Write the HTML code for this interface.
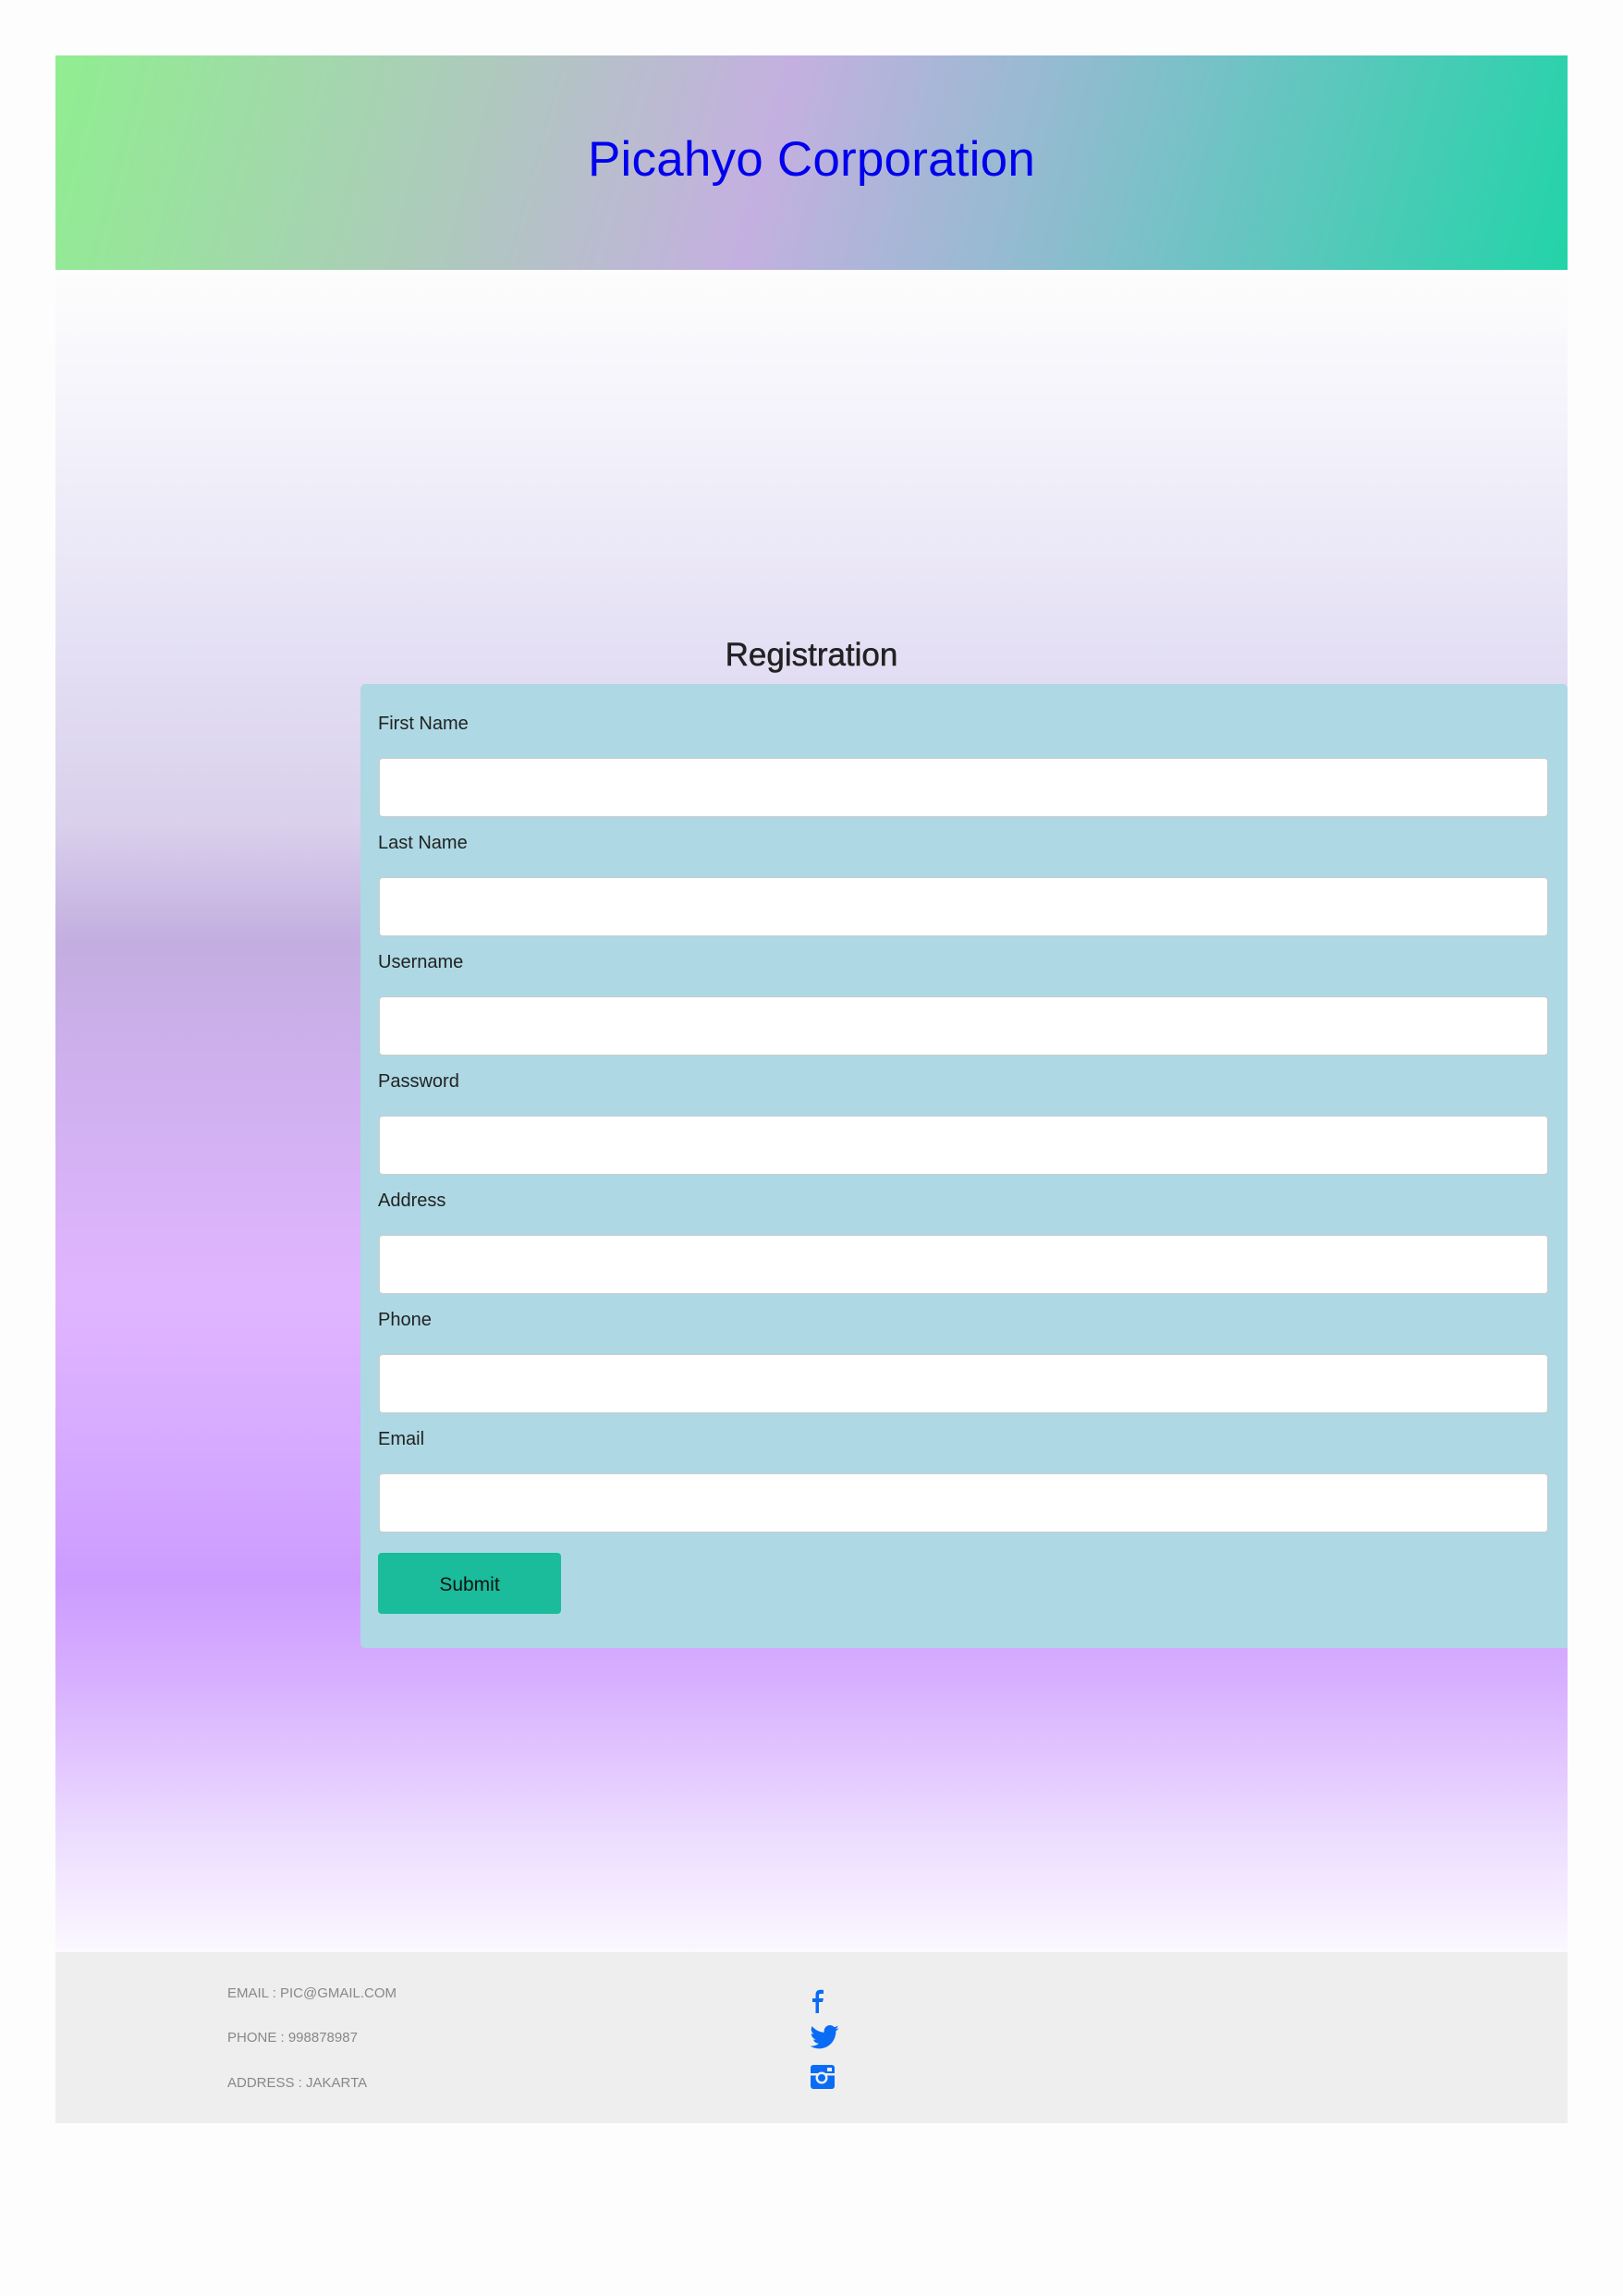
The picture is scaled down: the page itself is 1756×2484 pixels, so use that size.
<!DOCTYPE html>
<html><head><meta charset="utf-8">
<style>
*{box-sizing:border-box;margin:0;padding:0}
body{width:1756px;height:2484px;background:#fdfdfd;font-family:"Liberation Sans",sans-serif;position:relative;overflow:hidden}
.header{position:absolute;left:60px;top:60px;width:1636px;height:232px;background:linear-gradient(105deg,#90ee90 0%,#aec9bd 28%,#c4b0e0 47%,#8fbccf 66%,#22d4a8 100%)}
.header h1{position:absolute;left:0;right:0;top:83px;text-align:center;color:#0000ee;font-size:53px;font-weight:normal;line-height:60px;letter-spacing:0.2px}
.main{position:absolute;left:60px;top:292px;width:1636px;height:1820px;background:linear-gradient(180deg,#fdfdfd 0%,#f5f4fb 8%,#e6e2f5 21%,#d9d0ec 33%,#c3aee0 40%,#cfb0ee 48%,#e0b5ff 61%,#d6aaff 70%,#cc9cff 78%,#d8b0ff 84%,#ecdcff 93%,#fbf8ff 100%)}
.reg{position:absolute;left:0;right:0;top:394px;text-align:center;font-size:35px;color:#222;line-height:46px;-webkit-text-stroke:0.5px #222}
.panel{position:absolute;left:390px;top:740px;width:1306px;height:1043px;background:#add8e4;border-radius:5px 5px 0 5px}
.lbl{position:absolute;left:19px;font-size:20px;color:#222;line-height:24px}
.inp{position:absolute;left:20px;width:1265px;height:64px;background:#fff;border:1px solid #ccc;border-radius:4px}
.btn{position:absolute;left:19px;top:940px;width:198px;height:66px;background:#1abc9c;border-radius:4px;color:#111;font-size:21px;text-align:center;line-height:70px}
.footer{position:absolute;left:60px;top:2112px;width:1636px;height:185px;background:#eeeeee}
.ft{position:absolute;left:186px;font-size:15px;color:#888;line-height:18px}
.ic{position:absolute;left:817px}
</style></head><body>
<div class="header"><h1>Picahyo Corporation</h1></div>
<div class="main">
<div class="reg">Registration</div>
</div>
<div class="panel">
<div class="lbl" style="top:31px">First Name</div><div class="inp" style="top:80px"></div>
<div class="lbl" style="top:160px">Last Name</div><div class="inp" style="top:209px"></div>
<div class="lbl" style="top:289px">Username</div><div class="inp" style="top:338px"></div>
<div class="lbl" style="top:418px">Password</div><div class="inp" style="top:467px"></div>
<div class="lbl" style="top:547px">Address</div><div class="inp" style="top:596px"></div>
<div class="lbl" style="top:676px">Phone</div><div class="inp" style="top:725px"></div>
<div class="lbl" style="top:805px">Email</div><div class="inp" style="top:854px"></div>
<div class="btn">Submit</div>
</div>
<div class="footer">
<div class="ft" style="top:36px">EMAIL : PIC@GMAIL.COM</div>
<div class="ft" style="top:84px">PHONE : 998878987</div>
<div class="ft" style="top:133px">ADDRESS : JAKARTA</div>
<svg class="ic" style="top:40px" width="14" height="26" viewBox="0 0 14 26"><path d="M9 26V14h4l1-4H9V7c0-1.2.4-2 2-2h3V1C13 .8 12 .7 10.5.7 7.3.7 5.5 2.6 5.5 6v4H2v4h3.5v12z" fill="#0a6cf5"/></svg>
<svg class="ic" style="top:79px;left:816px" width="32" height="26" viewBox="0 0 24 20"><path d="M24 2.4a9.8 9.8 0 0 1-2.8.8A4.9 4.9 0 0 0 23.3.4a9.9 9.9 0 0 1-3.1 1.2A4.9 4.9 0 0 0 11.8 6 14 14 0 0 1 1.7.9a4.9 4.9 0 0 0 1.5 6.6A4.9 4.9 0 0 1 1 6.9 4.9 4.9 0 0 0 4.9 11.8a4.9 4.9 0 0 1-2.2.1 4.9 4.9 0 0 0 4.6 3.4A9.9 9.9 0 0 1 0 17.3 14 14 0 0 0 7.5 19.5c9 0 14-7.5 14-14v-.6A10 10 0 0 0 24 2.4z" fill="#0a6cf5"/></svg>
<svg class="ic" style="top:122px" width="26" height="26" viewBox="0 0 26 26"><rect x="0" y="0" width="26" height="26" rx="3" fill="#0a6cf5"/><rect x="0" y="9" width="26" height="2.5" fill="#eee"/><circle cx="12" cy="14" r="6.5" fill="#eee"/><circle cx="12" cy="14" r="4" fill="#0a6cf5"/><rect x="18" y="3" width="5" height="4" fill="#eee"/></svg>
</div>
</body></html>
